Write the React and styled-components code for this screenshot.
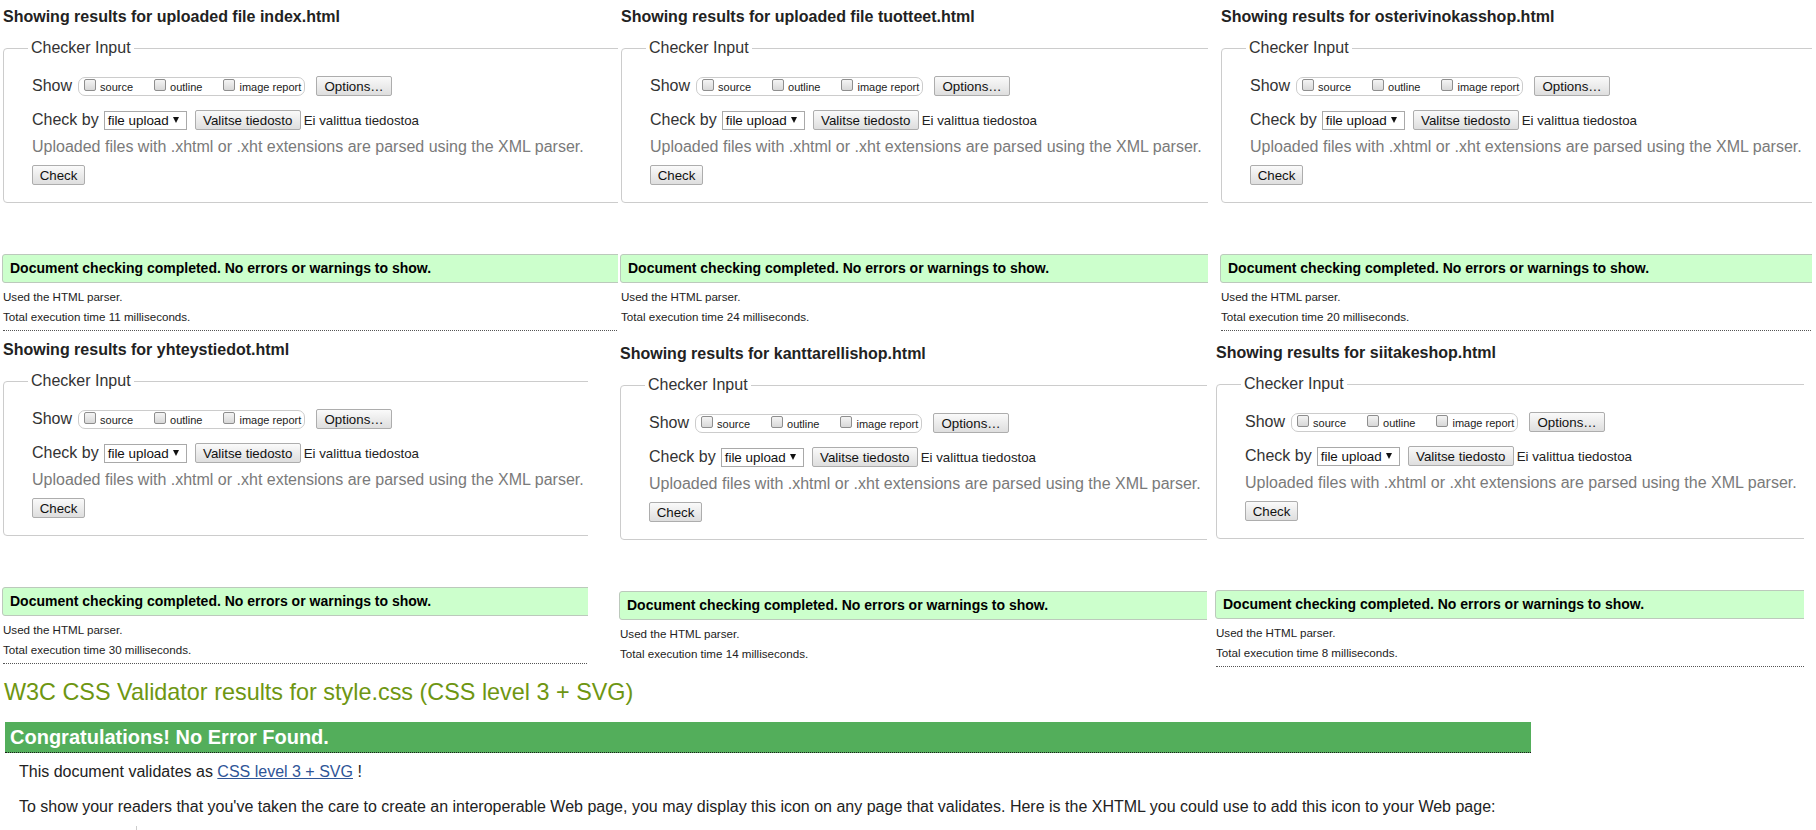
import React from "react";
import styled, { createGlobalStyle } from "styled-components";

const GlobalStyle = createGlobalStyle`
  body {
    margin: 0;
    background: #fff;
    font-family: "Liberation Sans", Arial, sans-serif;
    color: #222;
  }
`;

// height: crop of the screenshot piece; left out where the whole piece is shown
const panels = [
  [
    { title: "Showing results for uploaded file index.html", ms: 11, pad: 3, top: 7, width: 618, height: 325 },
    { title: "Showing results for yhteystiedot.html", ms: 30, pad: 3, top: 8, width: 588 },
  ],
  [
    { title: "Showing results for uploaded file tuotteet.html", ms: 24, pad: 3, top: 7, width: 590, height: 318 },
    { title: "Showing results for kanttarellishop.html", ms: 14, pad: 2, top: 19, width: 589, height: 316 },
  ],
  [
    { title: "Showing results for osterivinokasshop.html", ms: 20, pad: 13, top: 7, width: 604, height: 326 },
    { title: "Showing results for siitakeshop.html", ms: 8, pad: 8, top: 10, width: 596 },
  ],
];

const columnWidths = [618, 590, 608];

const Panel = ({ title, ms, pad, top, width, height }) => (
  <PanelFrame $pad={pad} $top={top} $width={width} $height={height}>
    <Title>{title}</Title>
    <FieldBox>
      <Legend>Checker Input</Legend>
      <Row>
        <RowLabel>Show</RowLabel>
        <ToggleGroup>
          <ToggleItem>
            <Box />
            source
          </ToggleItem>
          <ToggleItem>
            <Box />
            outline
          </ToggleItem>
          <ToggleItem $last>
            <Box />
            image report
          </ToggleItem>
        </ToggleGroup>
        <Button $w={76} $ml={11}>
          Options…
        </Button>
      </Row>
      <Row $mt={12}>
        <RowLabel>Check by</RowLabel>
        <Select>
          file upload
          <Caret />
        </Select>
        <Button $w={106} $ml={8}>
          Valitse tiedosto
        </Button>
        <FileName>Ei valittua tiedostoa</FileName>
      </Row>
      <Hint>Uploaded files with .xhtml or .xht extensions are parsed using the XML parser.</Hint>
      <Button $w={53} $mt={8}>
        Check
      </Button>
    </FieldBox>
    <Success>Document checking completed. No errors or warnings to show.</Success>
    <MetaBlock>
      <Meta>Used the HTML parser.</Meta>
      <Meta>Total execution time {ms} milliseconds.</Meta>
    </MetaBlock>
  </PanelFrame>
);

const App = () => {
  return (
    <Page>
      <GlobalStyle />
      <Collage>
        {panels.map((col, i) => (
          <Column key={i} $w={columnWidths[i]}>
            {col.map((p) => (
              <Panel key={p.title} {...p} />
            ))}
          </Column>
        ))}
      </Collage>
      <CssSection>
        <CssHeading>W3C CSS Validator results for style.css (CSS level 3 + SVG)</CssHeading>
        <Congrats>Congratulations! No Error Found.</Congrats>
        <Para $mt={9}>
          This document validates as <Link href="#">CSS level 3 + SVG</Link> !
        </Para>
        <Para $mt={15}>
          To show your readers that you've taken the care to create an interoperable Web page, you may display
          this icon on any page that validates. Here is the XHTML you could use to add this icon to your Web page:
        </Para>
        <CodeEdge />
      </CssSection>
    </Page>
  );
};

export default App;

const Page = styled.div`
  width: 1816px;
  height: 830px;
  overflow: hidden;
`;

const Collage = styled.div`
  display: flex;
  align-items: flex-start;
  height: 678px;
`;

const Column = styled.div`
  display: flex;
  flex-direction: column;
  width: ${(p) => p.$w}px;
  flex-shrink: 0;
`;

const PanelFrame = styled.section`
  box-sizing: border-box;
  width: ${(p) => p.$width}px;
  height: ${(p) => (p.$height ? `${p.$height}px` : "auto")};
  margin-top: ${(p) => p.$top}px;
  padding-left: ${(p) => p.$pad}px;
  overflow: hidden;
  flex-shrink: 0;
`;

const Title = styled.h2`
  margin: 0;
  font-size: 16px;
  line-height: 20px;
  font-weight: bold;
  color: #222;
  white-space: nowrap;
`;

const FieldBox = styled.div`
  position: relative;
  box-sizing: border-box;
  width: 720px;
  margin-top: 21px;
  padding: 26px 0 17px 28px;
  border: 1px solid #ccc;
  border-radius: 4px;
`;

const Legend = styled.span`
  position: absolute;
  top: -10px;
  left: 24px;
  padding: 0 3px;
  background: #fff;
  font-size: 16px;
  line-height: 18px;
  color: #333;
`;

const Row = styled.div`
  display: flex;
  align-items: center;
  height: 22px;
  margin-top: ${(p) => p.$mt || 0}px;
  white-space: nowrap;
`;

const RowLabel = styled.span`
  font-size: 16px;
  color: #333;
  margin-right: 5px;
`;

const ToggleGroup = styled.div`
  box-sizing: border-box;
  display: flex;
  align-items: center;
  width: 227px;
  height: 19px;
  margin-left: 1px;
  padding-left: 5px;
  border: 1px solid #ccc;
  border-radius: 7px;
`;

const ToggleItem = styled.label`
  display: flex;
  align-items: center;
  gap: 4px;
  margin-right: ${(p) => (p.$last ? 0 : 21)}px;
  font-size: 11px;
  line-height: 13px;
  color: #222;
  padding-top: 3px;
`;

const Box = styled.span`
  box-sizing: border-box;
  width: 12px;
  height: 12px;
  margin-top: -5px;
  border: 1px solid #8e8e8e;
  border-radius: 2px;
  background: linear-gradient(#f4f4f4, #d8d8d8);
`;

const Button = styled.div`
  box-sizing: border-box;
  display: flex;
  align-items: center;
  justify-content: center;
  width: ${(p) => p.$w}px;
  height: 20px;
  margin-left: ${(p) => p.$ml || 0}px;
  margin-top: ${(p) => p.$mt || 0}px;
  border: 1px solid #adadad;
  border-radius: 2px;
  background: linear-gradient(#fafafa, #dedede);
  font-size: 13.3px;
  color: #111;
  white-space: nowrap;
`;

const Select = styled.div`
  box-sizing: border-box;
  display: flex;
  align-items: center;
  justify-content: space-between;
  width: 83px;
  height: 19px;
  padding: 0 7px 0 3px;
  border: 1px solid #a9a9a9;
  background: #fff;
  font-size: 13.4px;
  color: #111;
`;

const Caret = styled.span`
  width: 0;
  height: 0;
  border-left: 3px solid transparent;
  border-right: 3px solid transparent;
  border-top: 6px solid #111;
`;

const FileName = styled.span`
  margin-left: 3px;
  font-size: 13.3px;
  color: #222;
`;

const Hint = styled.div`
  margin-top: 6px;
  font-size: 16px;
  line-height: 20px;
  color: #7a7a7a;
  white-space: nowrap;
`;

const Success = styled.div`
  box-sizing: border-box;
  width: 722px;
  height: 29px;
  margin: 51px 0 0 -1px;
  padding-left: 7px;
  border: 1px solid #bcc9bc;
  border-radius: 3px;
  background: #ccffcc;
  font-size: 14px;
  font-weight: bold;
  line-height: 27px;
  color: #000;
  white-space: nowrap;
`;

const MetaBlock = styled.div`
  width: 720px;
  margin-top: 4px;
  padding-bottom: 4px;
  border-bottom: 1px dotted #555;
`;

const Meta = styled.p`
  margin: 0;
  font-size: 11.6px;
  line-height: 19.5px;
  color: #222;
  white-space: nowrap;
`;

const CssSection = styled.div`
  display: flex;
  flex-direction: column;
  align-items: flex-start;
`;

const CssHeading = styled.h2`
  margin: 0;
  padding-left: 4px;
  font-size: 23.4px;
  font-weight: normal;
  line-height: 28px;
  color: #6e9612;
  white-space: nowrap;
`;

const Congrats = styled.h3`
  box-sizing: border-box;
  width: 1526px;
  height: 31px;
  margin: 16px 0 0 5px;
  padding-left: 5px;
  background: #53ae5b;
  border-bottom: 1px dotted #1b1b1b;
  font-size: 20px;
  font-weight: bold;
  line-height: 30px;
  color: #fff;
`;

const Para = styled.p`
  margin: ${(p) => p.$mt}px 0 0;
  padding-left: 19px;
  font-size: 16px;
  line-height: 20px;
  color: #222;
  white-space: nowrap;
`;

const Link = styled.a`
  color: #2f5597;
  text-decoration: underline;
`;

const CodeEdge = styled.div`
  width: 0;
  height: 12px;
  margin: 9px 0 0 136px;
  border-left: 1px solid #ccc;
`;
